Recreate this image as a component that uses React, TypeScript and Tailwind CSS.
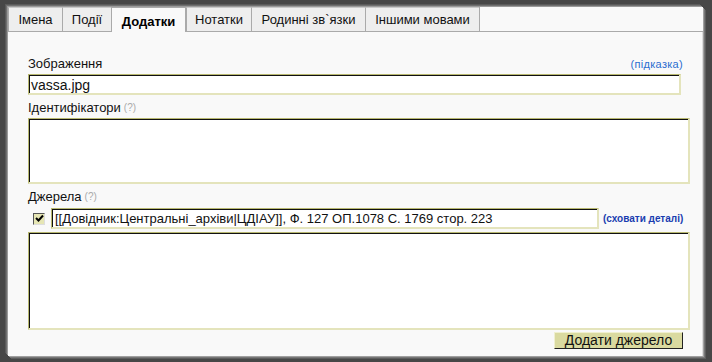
import React from "react";

const tabs = [
  { label: "Імена", w: "w-[54px]" },
  { label: "Події", w: "w-[49px]" },
  { label: "Додатки", w: "w-[75px]", active: true },
  { label: "Нотатки", w: "w-[65px]" },
  { label: "Родинні зв`язки", w: "w-[114px]" },
  { label: "Іншими мовами", w: "w-[114px]" },
];

function Field({ className, children }: { className?: string; children?: React.ReactNode }) {
  return (
    <div className={"border-t border-l border-t-[#b8b870] border-l-[#b8b870] border-b-2 border-r-2 border-b-[#e4e4bc] border-r-[#e4e4bc] " + (className || "")}>
      <div className="h-full w-full bg-white border-t border-l border-t-[#111] border-l-[#111]">{children}</div>
    </div>
  );
}

export default function App() {
  return (
    <div
      className="w-[712px] h-[362px] bg-[#474747] pl-[8px] pt-[7px] pr-[9px] pb-[6px]"
      style={{ fontFamily: '"Liberation Sans", Arial, sans-serif' }}
    >
      <div className="h-full w-full bg-[#f9f9f9] flex flex-col shadow-[-1px_-1px_0_#9a9a9a,-2px_-2px_0_#707070,-3px_-3px_0_#5a5a5a,1px_1px_0_#a0a0a0,2px_2px_0_#777,3px_3px_0_#5e5e5e]">
        <div className="flex h-[25px] shrink-0">
          {tabs.map((t) =>
            t.active ? (
              <div
                key={t.label}
                className={`${t.w} h-[25px] flex items-center justify-center bg-[#f9f9f9] border-t border-[#aaa] border-l border-r text-[13px] font-bold text-black pt-[3px]`}
              >
                {t.label}
              </div>
            ) : (
              <div
                key={t.label}
                className={`${t.w} h-[25px] flex items-center justify-center bg-[#eeeeee] border-t border-t-[#c8c8c8] border-l border-l-[#aaa] border-b border-b-[#aaa] text-[13px] text-[#111] pt-[1px]`}
              >
                {t.label}
              </div>
            )
          )}
          <div className="flex-1 border-l border-l-[#aaa] border-b border-b-[#aaa]" />
        </div>
        <div className="flex-1 border-r border-r-[#ddd] pl-[20px] pr-[10px] pt-[23px] flex flex-col">
          <div className="flex items-start justify-between w-[655px] h-[18px]">
            <span className="text-[13px] text-[#111] leading-[15px] mt-[1px]">Зображення</span>
            <span className="text-[11px] text-[#2a6dd0] tracking-[0.3px] leading-[13px] mt-[3px]">(підказка)</span>
          </div>
          <Field className="w-[653px] h-[21px] mt-[1px]">
            <div className="text-[14px] leading-[18px] pl-[1px] text-[#111]">vassa.jpg</div>
          </Field>
          <div className="h-[18px] flex items-end text-[13px] text-[#111] leading-[15px] mt-[2px]">
            Ідентифікатори <span className="text-[10px] text-[#aaa] ml-[3px]">(?)</span>
          </div>
          <Field className="w-[662px] h-[66px] mt-[3px]" />
          <div className="h-[17px] flex items-end text-[13px] text-[#111] leading-[15px] mt-[3px]">
            Джерела <span className="text-[10px] text-[#aaa] ml-[3px]">(?)</span>
          </div>
          <div className="flex items-center h-[21px] mt-[4px]">
            <div className="ml-[5px] w-[12px] h-[12px] bg-[#e6e6b4] border border-t-[#555] border-l-[#555] border-b-[#ddd] border-r-[#ddd] flex items-center justify-center">
              <svg width="9" height="9" viewBox="0 0 9 9">
                <path d="M1 4 L3.5 6.5 L8 1.5" stroke="#000" strokeWidth="2" fill="none" />
              </svg>
            </div>
            <Field className="ml-[6px] w-[548px] h-[21px]">
              <div className="text-[13px] leading-[18px] pl-[2px] text-[#111] whitespace-nowrap overflow-hidden">
                [[Довідник:Центральні_архіви|ЦДІАУ]], Ф. 127 ОП.1078 С. 1769 стор. 223
              </div>
            </Field>
            <span className="ml-[4px] text-[10px] font-bold text-[#1a3db0] tracking-[0px]">(сховати деталі)</span>
          </div>
          <Field className="w-[662px] h-[98px] mt-[3px]" />
          <div className="flex justify-end w-[655px] mt-[2px]">
            <div className="w-[129px] h-[17px] bg-[#dadaa0] border border-t-[#f0f0d0] border-l-[#f0f0d0] border-b-[#222] border-r-[#222] flex items-center justify-center text-[14px] text-[#111]">
              Додати джерело
            </div>
          </div>
        </div>
      </div>
    </div>
  );
}
